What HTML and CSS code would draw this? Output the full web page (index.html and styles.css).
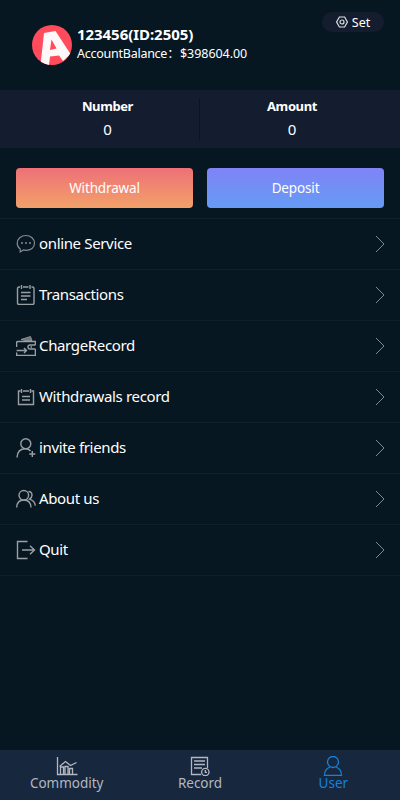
FILE: index.html
```html
<!DOCTYPE html>
<html lang="en">
<head>
<meta charset="utf-8">
<meta name="viewport" content="width=device-width, initial-scale=1">
<title>User</title>
<link rel="stylesheet" href="styles.css">
</head>
<body>
<div class="page">
  <header class="profile">
    <svg class="avatar" viewBox="0 0 40 40"><defs><clipPath id="round"><circle cx="20" cy="20" r="20"/></clipPath></defs><g clip-path="url(#round)"><rect width="40" height="40" fill="#ff4b5c"/><path d="M12 8 23.500 6 38.500 29 31 36 27 30.500 18 31.500 17 40H8.500ZM19.500 14.500 18 25 24.500 23.500Z" fill="#fff8f9" fill-rule="evenodd"/></g></svg>
    <div class="identity">
      <div class="name"><span>123456(ID:2505)</span></div>
      <div class="balance"><span class="balance-label">AccountBalance：</span><span class="money">$398604.00</span></div>
    </div>
    <a class="set"><svg width="12" height="12" viewBox="0 0 12 12"><path d="M3.400 1H8.600L11.400 6 8.600 11H3.400L.6 6Z"/><circle cx="6" cy="6" r="2"/></svg><span>Set</span></a>
  </header>
  <section class="stats">
    <div class="stat"><b>Number</b><span>0</span></div>
    <div class="stat"><b>Amount</b><span>0</span></div>
  </section>
  <section class="actions">
    <button class="btn withdraw">Withdrawal</button>
    <button class="btn deposit">Deposit</button>
  </section>
  <nav class="menu">
    <a class="row"><svg class="icon" viewBox="0 0 20 20"><path d="M4.200 18V14.900C2.400 13.600 1.200 11.500 1.200 9.200 1.200 4.800 5 1.500 9.900 1.500S18.500 4.800 18.500 9.200 14.800 16.400 9.900 16.400L7.500 16Z"/><path d="M5 9h2M9 9h2M13 9h2" stroke-width="1.600"/></svg><span>online Service</span><svg class="arrow" viewBox="0 0 10 18"><path d="M1 1 9 9 1 17"/></svg></a>
    <a class="row"><svg class="icon strong" viewBox="0 0 20 20"><path d="M4 2H3Q1.500 2 1.500 3.500V18Q1.500 19.500 3 19.500H16.500Q18 19.500 18 18V3.500Q18 2 16.500 2H15.500M7 2h5.500M5.500 0v4M14 0v4M5 7.500h9.500M5 11h9.500M5 14.500h6"/></svg><span>Transactions</span><svg class="arrow" viewBox="0 0 10 18"><path d="M1 1 9 9 1 17"/></svg></a>
    <a class="row"><svg class="icon strong" viewBox="0 0 20 20"><path d="M.6 11V6.500Q.6 5.500 2 5.500H19.400V9M19.400 13V19.400H.6V16.500M19.400 9H14Q12 9 12 11T14 13H19.400M14.500 11h1.500M.6 14.500H10.500M8 12 10.500 14.500 8 17"/><path d="M5 3.500 14.500.5 16 4.500H9Z" fill="#70777c" stroke-width=".8"/></svg><span>ChargeRecord</span><svg class="arrow" viewBox="0 0 10 18"><path d="M1 1 9 9 1 17"/></svg></a>
    <a class="row"><svg class="icon strong" viewBox="0 0 20 20"><path d="M4.500 4H2.500V17.500H17.500V4H15.500M7 4h6M5.500 2v4M14.500 2v4M6 9.500h8M6 13h8"/></svg><span>Withdrawals record</span><svg class="arrow" viewBox="0 0 10 18"><path d="M1 1 9 9 1 17"/></svg></a>
    <a class="row"><svg class="icon strong" viewBox="0 0 20 20"><circle cx="9.800" cy="5.800" r="5"/><path d="M1 19.500Q1.500 10.800 9.500 10.800 12.800 10.800 14.500 13M16.300 13v6M13.300 16h6"/></svg><span>invite friends</span><svg class="arrow" viewBox="0 0 10 18"><path d="M1 1 9 9 1 17"/></svg></a>
    <a class="row"><svg class="icon strong" viewBox="0 0 20 20"><circle cx="7.800" cy="6.300" r="4.800"/><path d="M.7 18.500Q1 11 7.800 11T15 18.500M12.500 2.500Q16 2.500 16 6.300 16 8.500 13.500 10.200 19 12 19.300 16.800"/></svg><span>About us</span><svg class="arrow" viewBox="0 0 10 18"><path d="M1 1 9 9 1 17"/></svg></a>
    <a class="row"><svg class="icon strong" viewBox="0 0 20 20"><path d="M11.500 1.500H1.500V18.500H11.500M6 10H18.300M14 5.700 18.500 10 14 14.300"/></svg><span>Quit</span><svg class="arrow" viewBox="0 0 10 18"><path d="M1 1 9 9 1 17"/></svg></a>
  </nav>
  <footer class="tabs">
    <a class="tab"><svg viewBox="0 0 22 20"><path d="M1.500 1V18.500H21.500M4.500 18V11H7.500V18M9 18V10.500H12V18M13.500 18V12.500H16.500V18M3.500 10.500 9.500 5.500 14.500 9.500 20.500 6.500"/></svg><span>Commodity</span></a>
    <a class="tab"><svg viewBox="0 0 22 20"><path d="M12 18.500H2.500V1.500H18.500V12M5 5h11M5 8.500h11M5 12h8"/><circle cx="16.300" cy="16" r="3.700"/><path d="M16.300 14v2.300H18"/></svg><span>Record</span></a>
    <a class="tab active"><svg viewBox="0 0 22 20"><circle cx="11" cy="6" r="5.500"/><path d="M8 11Q2.500 13 2.500 19.500H19.500Q19.500 13 14 11"/></svg><span>User</span></a>
  </footer>
</div>
</body>
</html>
```
FILE: styles.css
```css
* { box-sizing: border-box; }
body { margin: 0; background: #071722; color: #fff; font-family: "Noto Sans", "Open Sans", "Noto Sans CJK SC", sans-serif; }
svg { fill: none; flex: none; }
.page { height: 800px; display: flex; flex-direction: column; }
.profile { height: 90px; display: flex; padding: 25px 16px 0 32px; }
.avatar { width: 40px; height: 40px; }
.identity { margin-left: 5px; flex: 1; white-space: nowrap; }
.name { font-size: 15px; font-weight: 700; line-height: 18px; letter-spacing: -.05px; }
.balance { margin-top: 2px; font-size: 12.500px; line-height: 18px; display: flex; letter-spacing: -.25px; }
.balance-label { width: 103px; }
.money { letter-spacing: -.05px; }
.set { display: flex; align-items: center; justify-content: center; gap: 4px; width: 62px; height: 20px; margin-top: -13px; border-radius: 10px; background: #141d2e; font-size: 12.500px; }
.set svg { stroke: #dce0e5; stroke-width: 1.2; }
.stats { height: 58px; display: flex; padding: 8px 16px; background: #141d2f; }
.stat { flex: none; width: 184px; display: flex; flex-direction: column; align-items: center; }
.stat:first-child { border-right: 1px solid #071621; }
.stat b { font-size: 13px; line-height: 17px; letter-spacing: -.4px; }
.stat span { font-size: 15px; line-height: 28px; letter-spacing: -.2px; }
.actions { display: flex; gap: 14px; padding: 20px 16px 10px; }
.btn { flex: 1; height: 40px; border: 0; border-radius: 4px; color: #fff; font: 13.500px "Noto Sans", sans-serif; letter-spacing: -.15px; }
.withdraw { background: linear-gradient(#ee7077, #f2a169); }
.deposit { background: linear-gradient(#8083f6, #659bf5); }
.menu { border-top: 1px solid #111e2b; }
.row { display: flex; align-items: center; height: 51px; padding: 0 15px 0 16px; border-bottom: 1px solid #111e2b; font-size: 15px; letter-spacing: -.35px; }
.row span { flex: 1; margin-left: 3px; padding-bottom: 2px; white-space: nowrap; }
.icon { width: 20px; height: 20px; stroke: #848b8f; stroke-width: 1.2; }
.strong { stroke: #9a9fa3; stroke-width: 1.4; }
.arrow { width: 10px; height: 18px; stroke: #80878d; stroke-width: 1; }
.tabs { height: 50px; margin-top: auto; display: flex; background: #17273e; color: #b2b8c0; }
.tab { flex: 1; display: flex; flex-direction: column; align-items: center; padding-top: 6px; font-size: 13.500px; line-height: 15px; letter-spacing: -.02px; }
.tab svg { width: 22px; height: 20px; stroke: currentColor; stroke-width: 1.3; }
.active { color: #1580df; }
```
